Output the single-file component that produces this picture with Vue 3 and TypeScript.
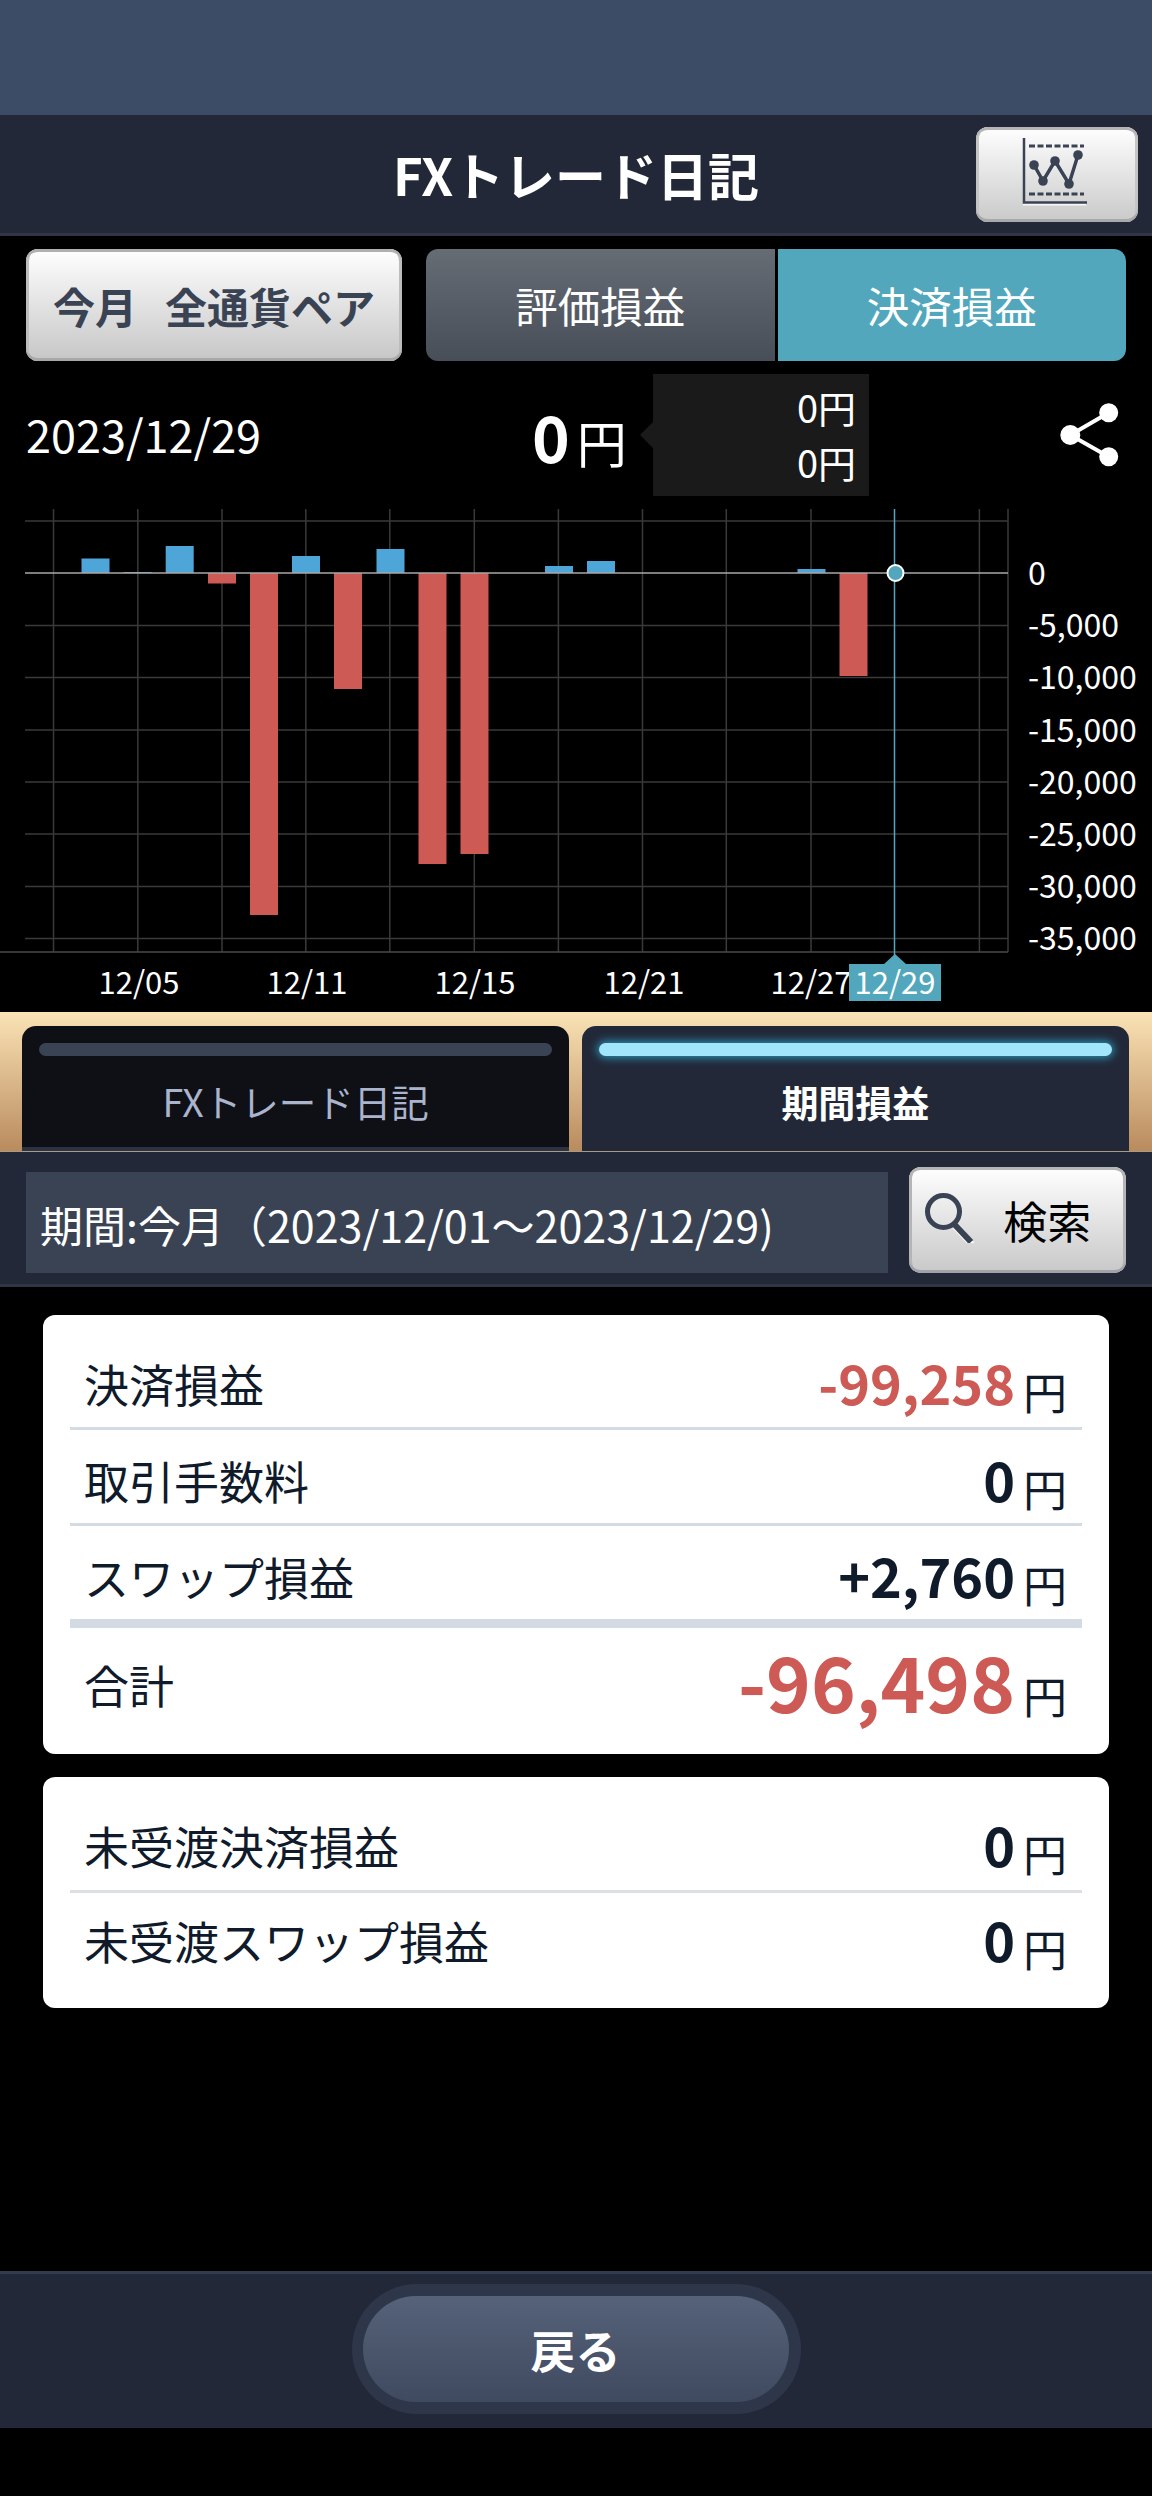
<script setup lang="ts">
interface Bar { x: number; y: number; h: number; pos: boolean }
const zero = 572
const tops: [number, number, boolean][] = [
  [81.5, 557.5, true], [123.5, 571, true], [165.7, 545, true], [208, 582.5, false], [250, 914, false],
  [292, 555, true], [334, 688, false], [376.5, 548, true], [418.5, 863, false], [460.5, 853, false],
  [545, 565, true], [587, 560, true], [797.5, 568, true], [839.5, 675, false],
]
const bars: Bar[] = tops.map(([x, v, pos]) => ({
  x,
  pos,
  y: pos ? v : zero,
  h: pos ? zero - v : v - zero,
}))
const vLines = [53.5, 137.8, 222, 305.8, 389.8, 474.3, 558.4, 642.5, 726.3, 811, 979.4, 1008]
const hLines = [520, 624.5, 676.5, 729, 781, 833, 885.5, 937.5]
const yLabels = ['0', '-5,000', '-10,000', '-15,000', '-20,000', '-25,000', '-30,000', '-35,000']
const xLabels = [
  { t: '12/05', x: 139 },
  { t: '12/11', x: 307 },
  { t: '12/15', x: 475 },
  { t: '12/21', x: 644 },
  { t: '12/27', x: 811 },
]
const summary = [
  { label: '決済損益', value: '-99,258', red: true, cls: 'r1' },
  { label: '取引手数料', value: '0', red: false, cls: 'r2' },
  { label: 'スワップ損益', value: '+2,760', red: false, cls: 'r3' },
]
</script>

<template>
  <div class="page">
    <div class="status"></div>
    <header class="head">
      <h1 class="title">FXトレード日記</h1>
      <button class="chart-btn" aria-label="chart">
        <svg width="72" height="72" viewBox="0 0 72 72">
          <g transform="translate(0 1.5)" stroke="#fff" fill="none" stroke-width="3" opacity=".8">
            <path d="M2 64.5H65" />
            <path d="M13 27 22 43 34 23 48 46 57 17" />
          </g>
          <path d="M3 0V64.5H66" fill="none" stroke="#3a4354" stroke-width="2.5" />
          <path d="M8 8H63M8 56H63" fill="none" stroke="#3a4354" stroke-width="3" stroke-dasharray="6 2.5" />
          <path d="M13 27 22 43 34 23 48 46 57 17" fill="none" stroke="#3a4354" stroke-width="3.5" />
          <circle cx="13" cy="27" r="4.8" fill="#3a4354" />
          <circle cx="22" cy="43" r="4.8" fill="#3a4354" />
          <circle cx="34" cy="23" r="4.8" fill="#3a4354" />
          <circle cx="48" cy="46" r="4.8" fill="#3a4354" />
          <circle cx="57" cy="17" r="4.8" fill="#3a4354" />
        </svg>
      </button>
    </header>

    <section class="controls">
      <button class="range-btn"><span>今月</span><span class="range-b">全通貨ペア</span></button>
      <div class="toggle">
        <div class="tg tg-off">評価損益</div>
        <div class="tg tg-on">決済損益</div>
      </div>
    </section>

    <section class="info">
      <div class="date">2023/12/29</div>
      <div class="total"><b>0</b><span>円</span></div>
      <div class="pop">
        <div>0円</div>
        <div>0円</div>
      </div>
      <svg class="share" width="64" height="66" viewBox="0 0 64 66">
        <path d="M50.7 10.7 12.3 33 50.7 54.7" fill="none" stroke="#fff" stroke-width="4" />
        <circle cx="50.7" cy="10.7" r="9.5" fill="#fff" />
        <circle cx="12.3" cy="33" r="10" fill="#fff" />
        <circle cx="50.7" cy="54.7" r="9.5" fill="#fff" />
      </svg>
    </section>

    <svg class="chart" width="1152" height="516" viewBox="0 495 1152 516">
      <g stroke="#3a3a3a" stroke-width="1.5">
        <line v-for="x in vLines" :key="x" :x1="x" :x2="x" y1="508" y2="951" />
        <line v-for="y in hLines" :key="y" x1="25" x2="1008" :y1="y" :y2="y" />
      </g>
      <line x1="0" x2="1008" y1="951" y2="951" stroke="#4a4a4a" stroke-width="1.5" />
      <rect
        v-for="b in bars"
        :key="b.x"
        :x="b.x"
        :y="b.y"
        width="28"
        :height="b.h"
        :fill="b.pos ? '#4ea6d8' : '#cd5a55'"
      />
      <line x1="25" x2="1008" :y1="zero" :y2="zero" stroke="#a8a8a8" stroke-width="1.5" />
      <line x1="894.5" x2="894.5" y1="508" y2="955" stroke="#52a7bc" stroke-width="1.5" />
      <circle cx="895.5" :cy="zero" r="8" fill="#52a7bc" stroke="#fff" stroke-width="2" />
      <g fill="#fff">
        <text v-for="(t, i) in yLabels" :key="t" class="ytick" x="1028" :y="584 + i * 52.2">{{ t }}</text>
        <text v-for="l in xLabels" :key="l.t" class="xtick" :x="l.x" y="993" text-anchor="middle">{{ l.t }}</text>
      </g>
      <path d="M849 963H884L895 953 906 963H941V1000H849Z" fill="#52a7bc" />
      <text class="xtick" x="895" y="993" text-anchor="middle" fill="#fff">12/29</text>
    </svg>

    <nav class="tabs">
      <div class="tab tab-off">
        <i class="lamp"></i>
        <span>FXトレード日記</span>
      </div>
      <div class="tab tab-on">
        <i class="lamp"></i>
        <span>期間損益</span>
      </div>
    </nav>

    <section class="period">
      <div class="field">期間:今月（2023/12/01〜2023/12/29)</div>
      <button class="search">
        <svg width="50" height="50" viewBox="0 0 50 50">
          <path d="M30 32 47 50" stroke="#fff" stroke-width="6" fill="none" transform="translate(0 1.5)" />
          <circle cx="18.5" cy="18.5" r="16" fill="none" stroke="#3a4354" stroke-width="5" />
          <path d="M30 32 46 49" stroke="#3a4354" stroke-width="6" fill="none" />
        </svg>
        <span>検索</span>
      </button>
    </section>

    <main class="cards">
      <div class="card">
        <div v-for="r in summary" :key="r.label" class="row" :class="r.cls">
          <span class="lab">{{ r.label }}</span>
          <span class="val"><b class="num" :class="{ red: r.red }">{{ r.value }}</b><span class="yen">円</span></span>
        </div>
        <div class="row sum">
          <span class="lab">合計</span>
          <span class="val"><b class="num big red">-96,498</b><span class="yen">円</span></span>
        </div>
      </div>
      <div class="card">
        <div class="row c2a">
          <span class="lab">未受渡決済損益</span>
          <span class="val"><b class="num">0</b><span class="yen">円</span></span>
        </div>
        <div class="row c2b">
          <span class="lab">未受渡スワップ損益</span>
          <span class="val"><b class="num">0</b><span class="yen">円</span></span>
        </div>
      </div>
    </main>

    <footer class="foot">
      <div class="back-ring"><button class="back">戻る</button></div>
    </footer>
  </div>
</template>

<style>
html, body { margin: 0; background: #000; }
</style>

<style scoped>
.page {
  width: 1152px;
  height: 2496px;
  background: #000;
  color: #fff;
  font-family: "Noto Sans CJK JP", "Noto Sans", sans-serif;
  display: flex;
  flex-direction: column;
  overflow: hidden;
}
button { font-family: inherit; border: 0; padding: 0; }
.status { height: 115px; background: #3c4b66; flex: none; }
.head {
  height: 118px;
  flex: none;
  box-sizing: content-box;
  border-bottom: 3px solid #2d3546;
  background: #222838;
  display: flex;
  align-items: center;
  justify-content: flex-end;
  padding-right: 14px;
  position: relative;
}
.title {
  position: absolute;
  left: 0;
  right: 0;
  margin: 0;
  text-align: center;
  font-size: 51px;
  line-height: 1;
  font-weight: 700;
}
.chart-btn {
  width: 162px;
  height: 95px;
  border-radius: 12px;
  background: linear-gradient(#fff, #c9c9c9);
  box-shadow: inset 0 3px 0 #b5b5b5, inset 0 -3px 0 #a9a9a9, inset 3px 0 0 #c5c5c5, inset -3px 0 0 #c5c5c5;
  display: flex;
  align-items: center;
  justify-content: center;
}
.controls {
  flex: none;
  height: 112px;
  margin-top: 13px;
  padding: 0 26px;
  display: flex;
  gap: 24px;
}
.range-btn {
  width: 376px;
  height: 112px;
  border-radius: 12px;
  background: linear-gradient(#fff, #c6c6c6);
  box-shadow: inset 0 3px 0 #b0b0b0, inset 0 -3px 0 #a8a8a8, inset 3px 0 0 #bdbdbd, inset -3px 0 0 #bdbdbd;
  color: #3a4354;
  font-size: 42px;
  font-weight: 700;
  display: flex;
  align-items: center;
  justify-content: center;
}
.range-b { margin-left: 28px; }
.toggle { width: 700px; display: flex; gap: 3px; }
.tg {
  flex: 1;
  display: flex;
  align-items: center;
  justify-content: center;
  font-size: 42.5px;
  padding-bottom: 2px;
}
.tg-off { background: linear-gradient(#666c74, #474e58); border-radius: 12px 0 0 12px; }
.tg-on { background: #52a7bc; border-radius: 0 12px 12px 0; }
.info {
  flex: none;
  height: 122px;
  margin-top: 13px;
  position: relative;
  display: flex;
  align-items: center;
  padding-left: 26px;
}
.date { width: 506px; font-size: 45px; line-height: 1; padding-bottom: 3px; }
.total { display: flex; align-items: baseline; width: 121px; line-height: 1; }
.total b { font-size: 64px; }
.total span { font-size: 50px; margin-left: 7px; }
.pop {
  width: 216px;
  height: 122px;
  box-sizing: border-box;
  background: #1a1a1a;
  font-size: 38px;
  line-height: 55px;
  text-align: right;
  padding: 5px 13px 0 0;
  position: relative;
}
.pop::before {
  content: "";
  position: absolute;
  left: -13px;
  top: 48px;
  border: 13px solid transparent;
  border-left: 0;
  border-right-color: #1a1a1a;
}
.share { margin-left: 189px; }
.chart { display: block; flex: none; }
.ytick { font-size: 32px; }
.xtick { font-size: 31px; }
.tabs {
  flex: none;
  height: 140px;
  box-sizing: border-box;
  border-bottom: 1px solid #a89a85;
  background: linear-gradient(#fae3b6, #b98b5e);
  padding: 14px 23px 0 22px;
  display: flex;
  gap: 12.5px;
}
.tab {
  flex: 1;
  border-radius: 14px 14px 0 0;
  display: flex;
  flex-direction: column;
  align-items: center;
}
.tab span { line-height: 1; }
.lamp {
  display: block;
  align-self: stretch;
  height: 13px;
  margin: 17px 17px 0;
  border-radius: 7px;
}
.tab-off { background: #0e1016; color: #aab4cc; border-bottom: 4px solid #2b3343; }
.tab-off .lamp { background: #3a4354; }
.tab-off span { margin-top: 26px; font-size: 37.5px; }
.tab-on { background: #222838; font-weight: 700; }
.tab-on .lamp { background: #a2e6fb; box-shadow: 0 0 9px 2px #2d8fb0; }
.tab-on span { margin-top: 28px; font-size: 37px; }
.period {
  flex: none;
  height: 135px;
  box-sizing: border-box;
  border-bottom: 3px solid #2d3546;
  background: #222838;
  padding: 15px 26px 0;
  display: flex;
  align-items: flex-start;
  gap: 21px;
}
.field {
  width: 863px;
  height: 101px;
  margin-top: 5px;
  box-sizing: border-box;
  background: #3a4354;
  font-size: 43px;
  line-height: 1;
  padding: 31px 0 0 14px;
  white-space: nowrap;
  overflow: hidden;
}
.search {
  width: 217px;
  height: 106px;
  border-radius: 12px;
  background: linear-gradient(#fff, #c8c8c8);
  box-shadow: inset 0 3px 0 #b5b5b5, inset 0 -3px 0 #a0a4aa, inset 3px 0 0 #b5b5b5, inset -3px 0 0 #b5b5b5;
  color: #000;
  display: flex;
  align-items: center;
  padding: 0 0 0 16px;
}
.search svg { margin-top: -4px; flex: none; }
.search span { font-size: 44px; line-height: 1; margin-left: 28px; }
.cards {
  flex: none;
  height: 984px;
  box-sizing: border-box;
  padding: 28px 43px 0;
  display: flex;
  flex-direction: column;
  gap: 23px;
}
.card {
  background: #fff;
  border-radius: 12px;
  padding: 0 27px;
  color: #0f1a2b;
}
.row {
  display: flex;
  align-items: center;
  justify-content: space-between;
  box-sizing: border-box;
  padding-left: 14px;
  padding-right: 15px;
}
.r1 { height: 115px; padding-top: 28px; border-bottom: 3px solid #d5dbe3; }
.r2 { height: 96px; padding-top: 10px; border-bottom: 3px solid #d5dbe3; }
.r3 { height: 102px; padding-top: 10px; border-bottom: 9px solid #d3dae2; }
.sum { height: 126px; }
.c2a { height: 116px; padding-top: 26px; border-bottom: 3px solid #dcdfe3; }
.c2b { height: 115px; padding-bottom: 18px; }
.lab { font-size: 45px; line-height: 1; margin-bottom: 3px; }
.sum .lab { margin-bottom: 14px; }
.val { display: flex; align-items: baseline; line-height: 1; margin-bottom: 6px; }
.sum .val { margin-bottom: 22px; }
.num { font-size: 54px; }
.big { font-size: 76px; }
.red { color: #cd5a55; }
.yen { font-size: 44px; margin-left: 8px; transform: translateY(5px); }
.sum .yen { transform: translateY(1px); }
.foot {
  flex: none;
  height: 157px;
  box-sizing: border-box;
  border-top: 3px solid #333c4e;
  background: #222838;
  display: flex;
  justify-content: center;
  padding-top: 10px;
}
.back-ring {
  width: 449px;
  height: 130px;
  box-sizing: border-box;
  border-radius: 65px;
  background: #2e3749;
  padding: 12px 11px;
}
.back {
  display: block;
  width: 426px;
  height: 106px;
  border-radius: 53px;
  background: linear-gradient(#566279, #3f4a60);
  color: #fff;
  font-size: 45px;
  font-weight: 700;
}
</style>
